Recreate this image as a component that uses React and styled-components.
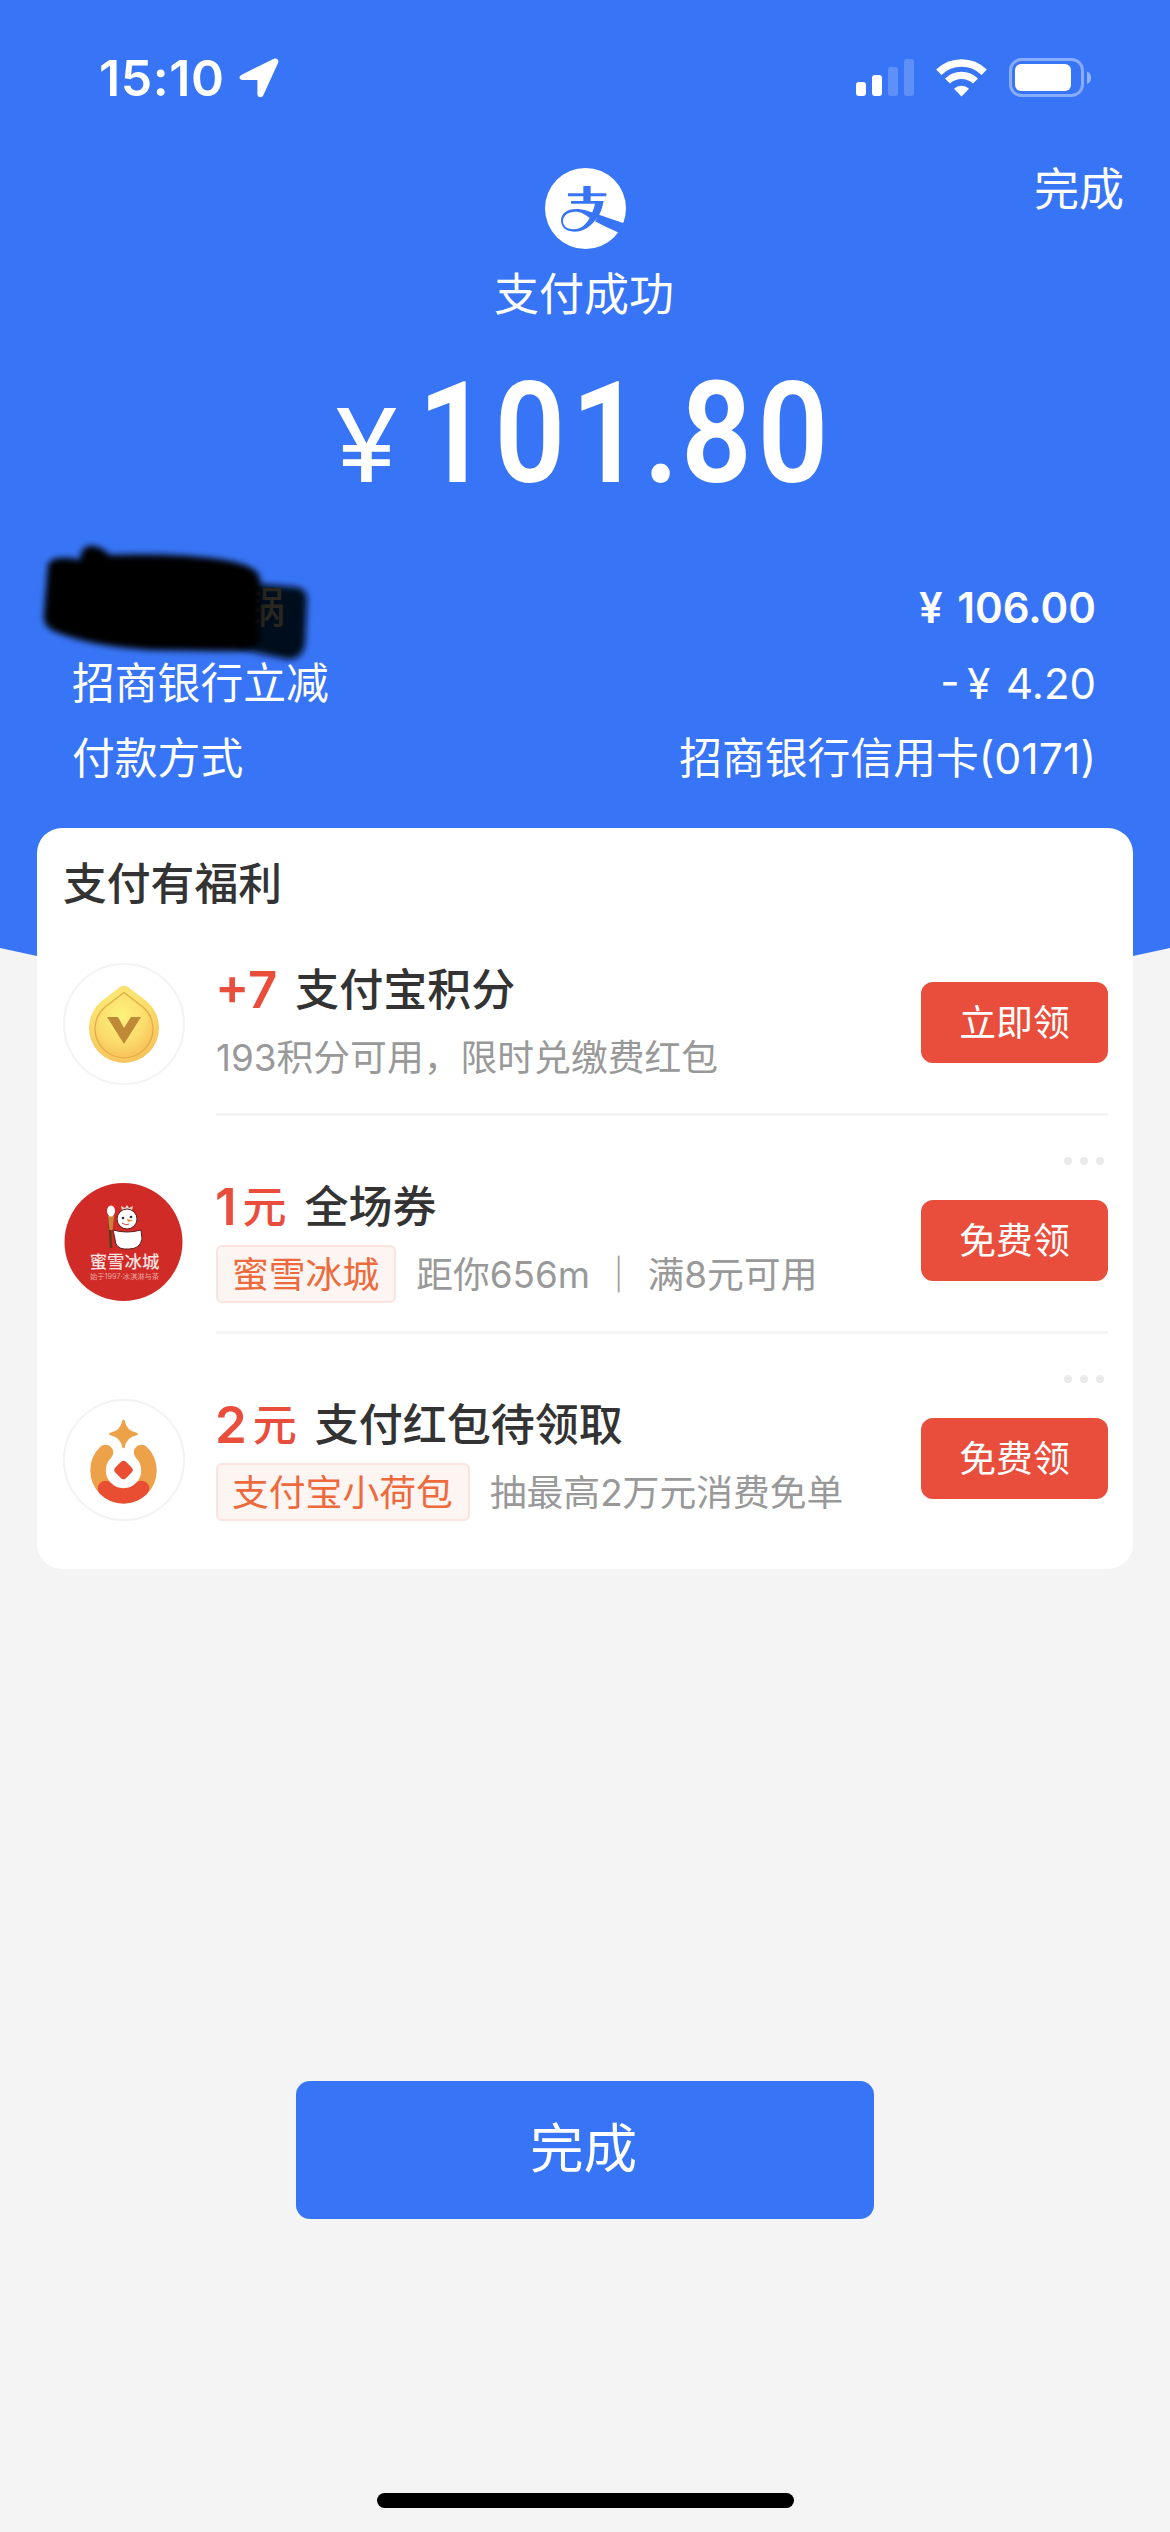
import styled, { createGlobalStyle } from "styled-components"

const Palette = {
  Blue: "#3875f6",
  Red: "#e94e3c",
  Orange: "#ec6a3c",
  Page: "#f4f4f4",
  Ink: "#333333",
  Muted: "#999999",
  Line: "#f4f4f4",
}

const GlobalStyle = createGlobalStyle`
  body {
    margin: 0;
    background: ${Palette.Page};
    font-family: Inter, "Noto Sans CJK SC", sans-serif;
  }

  * {
    box-sizing: border-box;
  }
`

const Screen = styled.main`
  display: flex;
  flex-direction: column;
  align-items: center;
  width: 1170px;
  height: 2532px;
  background: ${Palette.Page};
  overflow: hidden;
`

const Hero = styled.header`
  width: 100%;
  height: 990px;
  margin-bottom: -162px;
  flex: none;
  color: #fff;
  background: ${Palette.Blue};
  clip-path: polygon(0 0, 1170px 0, 1170px 948px, 1133px 956px, 960px 990px, 210px 990px, 37px 956px, 0 948px);
`

const StatusBar = styled.div`
  display: flex;
  align-items: center;
  height: 155px;
  padding: 0 78px 0 99px;
`

const Clock = styled.span`
  width: 140px;
  font-size: 50px;
  font-weight: 600;
  letter-spacing: 0.6px;
`

const StatusIcons = styled.div`
  display: flex;
  align-items: center;
  gap: 22px;
  margin-left: auto;
`

const NavBar = styled.div`
  display: grid;
  grid-template-columns: 1fr 81px 1fr;
  padding: 13px 46px 0 46px;
  height: 110px;
`

const NavAction = styled.button`
  grid-column: 3;
  justify-self: end;
  height: 44px;
  padding: 0;
  border: 0;
  background: none;
  color: #fff;
  font: inherit;
  font-size: 45px;
  line-height: 44px;
`

const LogoSlot = styled.div`
  grid-column: 2;
  height: 81px;
`

const ResultText = styled.p`
  margin: 0;
  padding-right: 2px;
  text-align: center;
  font-size: 45px;
  line-height: 60px;
`

const Amount = styled.div`
  display: flex;
  align-items: baseline;
  height: 140px;
  margin-top: 39px;
  padding-left: 335px;
  line-height: 140px;
`

const Currency = styled.span`
  width: 83px;
  font-size: 102px;
  font-weight: 400;
  transform: scaleX(1.12);
  transform-origin: 0 50%;
`

// Roboto squeezed to the proportions of a DIN numeral
const Digits = styled.span`
  font-family: Roboto, sans-serif;
  font-size: 141px;
  font-weight: 600;
  letter-spacing: 6.5px;
  transform: scaleX(0.88);
  transform-origin: 0 50%;
`

const Point = styled.span`
  margin: 0 -4px 0 -5px;
`

const Details = styled.dl`
  margin: 66px 0 0;
  padding: 0 74px 0 72px;
`

const DetailRow = styled.div`
  position: relative;
  display: flex;
  justify-content: space-between;
  height: 75.5px;
  line-height: 75.5px;
  font-size: 42.8px;
  font-weight: ${(p) => (p.$strong ? 600 : 400)};
  white-space: pre;

  dd {
    margin: 0;
    font-size: ${(p) => (p.$money ? "42px" : "inherit")};
    word-spacing: 4px;
  }
`

const ScribbleSvg = styled.svg`
  position: absolute;
  left: -52px;
  top: -30px;
`

const Card = styled.section`
  position: relative;
  flex: none;
  width: 1096px;
  height: 741px;
  padding: 25px 25px 0 26px;
  border-radius: 25px;
  background: #fff;
`

const CardTitle = styled.h2`
  margin: 0;
  height: 62px;
  line-height: 64px;
  color: ${Palette.Ink};
  font-size: 43.8px;
  font-weight: 500;
`

const Offer = styled.article`
  display: flex;
  height: 218px;
  padding-top: 48px;
`

const OfferIcon = styled.div`
  flex: none;
  width: 122px;
  height: 122px;
`

const OfferBody = styled.div`
  position: relative;
  display: flex;
  flex: 1;
  align-items: flex-start;
  height: 153px;
  margin-left: 31px;
  border-bottom: 3px solid ${(p) => (p.$last ? "transparent" : Palette.Line)};
`

const OfferText = styled.div`
  flex: 1;
  margin-top: ${(p) => (p.$tagged ? "-2px" : "-1px")};
`

const OfferTitle = styled.h3`
  display: flex;
  margin: 0;
  height: 56px;
  line-height: 56px;
  color: ${Palette.Ink};
  font-size: 44px;
  font-weight: 500;
`

const Reward = styled.span`
  display: flex;
  margin-right: 18px;
  color: ${Palette.Red};
  font-weight: 600;

  b {
    margin-right: ${(p) => (p.$unit ? "6px" : 0)};
    margin-left: -1px;
    font-size: 51px;
    font-weight: 600;
  }

  span {
    font-weight: 500;
  }
`

const OfferMeta = styled.div`
  display: flex;
  align-items: center;
  height: 58px;
  margin-top: 10px;
  color: ${Palette.Muted};
  font-size: 36.8px;
  line-height: 57px;
  font-weight: 400;
  white-space: pre;
`

const ShopTag = styled.span`
  height: 58px;
  margin-right: 20px;
  padding: 0 15px 0 14px;
  border: 2px solid #fbe3de;
  border-radius: 6px;
  background: #fdf5f2;
  color: ${Palette.Orange};
  line-height: 55px;
`

const ClaimButton = styled.button`
  width: 187px;
  height: 81px;
  margin-top: 19px;
  padding: 0;
  border: 0;
  border-radius: 12px;
  background: ${Palette.Red};
  color: #fff;
  font: inherit;
  font-size: 36.8px;
  line-height: 82px;
`

const MoreDots = styled.div`
  position: absolute;
  top: -24px;
  right: 4px;
  display: flex;
  gap: 8px;

  i {
    width: 8px;
    height: 8px;
    border-radius: 50%;
    background: #eaeaea;
  }
`

const DoneButton = styled.button`
  flex: none;
  width: 578px;
  height: 138px;
  margin-top: 512px;
  padding: 0 3px 3px 0;
  border: 0;
  border-radius: 14px;
  background: ${Palette.Blue};
  color: #fff;
  font: inherit;
  font-size: 53.6px;
  line-height: 135px;
`

const HomeIndicator = styled.div`
  flex: none;
  width: 417px;
  height: 15px;
  margin-top: 274px;
  border-radius: 8px;
  background: #000;
`

const LocationArrow = () => (
  <svg width="40" height="40" viewBox="0 0 40 40" fill="#fff">
    <path d="M3.2 16.4 34.5.9C37.5-.5 40.3 1.8 39 5L24.3 37.2C23 40.3 18.4 39.7 18.4 36V22H3.8C-.1 22-.9 18.2 3.2 16.4Z" />
  </svg>
)

const Signal = () => (
  <svg width="58" height="38" viewBox="0 0 58 38" fill="#fff">
    <rect x="0" y="23" width="10" height="14" rx="3" />
    <rect x="16" y="16" width="10" height="21" rx="3" />
    <rect x="32" y="8" width="10" height="29" rx="3" opacity="0.2" />
    <rect x="48" y="0" width="10" height="37" rx="3" opacity="0.2" />
  </svg>
)

const Wifi = () => (
  <svg width="51" height="38" viewBox="0 0 51 38" fill="none" stroke="#fff">
    <path d="M2.8 13.3a32.5 32.5 0 0 1 45.4 0" strokeWidth="7.5" />
    <path d="M11.5 22a20.2 20.2 0 0 1 28 0" strokeWidth="7.2" />
    <path d="M18 29.8a10.8 10.8 0 0 1 15 0L25.5 37.5Z" fill="#fff" stroke="none" />
  </svg>
)

const Battery = () => (
  <svg width="83" height="40" viewBox="0 0 83 40">
    <rect x="1.5" y="1.5" width="72" height="36" rx="11" fill="none" stroke="#fff" strokeOpacity="0.4" strokeWidth="3" />
    <rect x="6" y="6" width="56" height="27" rx="6" fill="#fff" />
    <path d="M78 13.5c5.5 2 5.5 10.5 0 12.5Z" fill="#fff" fillOpacity="0.45" />
  </svg>
)

const PayLogo = () => (
  <svg width="81" height="81" viewBox="0 0 243 243" fill={Palette.Blue}>
    <circle cx="121.5" cy="121.5" r="121.5" fill="#fff" />
    <path d="M115 54h22v49h-22zM69 76h115v9H69z" />
    <path d="M78 99h98c-4 20-10 37-18 50l-22-4c6-11 11-24 14-38H78Z" />
    <path
      fillRule="evenodd"
      d="M158 146C139 175 116 191 88 191 62 191 48 177 48 157 48 137 66 123 93 123 128 123 172 147 243 167L243 206 218 193C192 181 168 170 150 160ZM134 150C118 137 106 131 91 131 70 131 54 142 54 160 54 175 67 184 86 184 107 184 123 170 134 150Z"
    />
  </svg>
)

// Marker strokes over the merchant name
const Scribble = () => (
  <ScribbleSvg width="310" height="160" viewBox="0 0 310 160">
    <defs>
      <filter id="soft" x="-10%" y="-10%" width="120%" height="120%">
        <feGaussianBlur stdDeviation="3" />
      </filter>
    </defs>
    <path
      d="M215 42 276 47Q288 49 287 61L285 105Q281 121 266 119L215 108Z"
      fill="#060d1e"
      filter="url(#soft)"
    />
    <text x="223" y="83" fontSize="42" fontWeight="500" fill="#29271f">锅</text>
    <path
      d="M28 24Q34 14 60 20Q61 4 74 6Q82 7 90 15Q160 13 205 20Q240 26 240 40L239 102Q230 112 200 111L130 110Q70 106 36 92Q22 86 24 74Z"
      fill="#000"
      filter="url(#soft)"
    />
  </ScribbleSvg>
)

const PointsIcon = () => (
  <svg width="122" height="122" viewBox="0 0 122 122">
    <defs>
      <radialGradient id="gold" cx="0.45" cy="0.35" r="0.7">
        <stop offset="0" stopColor="#fdf27a" />
        <stop offset="0.6" stopColor="#fbdc6c" />
        <stop offset="1" stopColor="#f7bd57" />
      </radialGradient>
    </defs>
    <circle cx="61" cy="61" r="60" fill="#fff" stroke="#f3f3f3" strokeWidth="2" />
    <path d="M57 24Q61 21.5 65 24L84 38.5A35 35 0 1 1 38 38.5Z" fill="url(#gold)" />
    <path
      d="M61 29.5 80 44A29 29 0 1 1 42 44Z"
      fill="url(#gold)"
      stroke="#e3ac48"
      strokeWidth="1.3"
    />
    <path d="M44 54h11l6 11 7-11h10L61 81Z" fill="#bf8a38" />
  </svg>
)

const SnowmanIcon = () => (
  <svg width="122" height="122" viewBox="0 0 122 122">
    <circle cx="60.5" cy="61" r="59" fill="#d02b26" />
    <g transform="translate(0 -18)">
      <path d="M46 46 48 85" stroke="#5b3a1c" strokeWidth="2.5" />
      <path d="M45 53h6l-1.5 14h-3Z" fill="#c8843c" />
      <ellipse cx="48" cy="48" rx="4" ry="5.5" fill="#fff" />
      <path d="M59 47 58 43l4 2 2-3 2 3 4-2-1 4Z" fill="#e8d9cf" />
      <circle cx="64" cy="56" r="10" fill="#fff" stroke="#5e1d1a" strokeWidth="1" />
      <path
        d="M50 67Q64 71 78 67L79 76Q77 86 66 86H61Q52 85 52 76Z"
        fill="#fff"
        stroke="#5e1d1a"
        strokeWidth="1"
      />
      <circle cx="60" cy="55" r="1.3" fill="#22303f" />
      <circle cx="68" cy="54" r="1.3" fill="#22303f" />
      <path d="m64 56 6 1.5-5 1.5Z" fill="#ee8a2c" />
      <path d="M59 60q4 3 7 1" stroke="#c53a3a" fill="none" />
    </g>
    <text x="61.5" y="87" textAnchor="middle" fontSize="17.4" fontWeight="500" fill="#fbe3e2">蜜雪冰城</text>
    <text x="61.5" y="97.5" textAnchor="middle" fontSize="7.3" fill="#eba3a0">始于1997·冰淇淋与茶</text>
  </svg>
)

const PurseIcon = () => (
  <svg width="122" height="122" viewBox="0 0 122 122">
    <circle cx="61" cy="61" r="60" fill="#fff" stroke="#f3f3f3" strokeWidth="2" />
    <g fill="none" strokeWidth="15.5" strokeLinecap="round">
      <path d="M42.5 53.5A25.5 25.5 0 0 0 42.5 89.5" stroke="#eda148" />
      <path d="M78.5 53.5A25.5 25.5 0 0 1 78.5 89.5" stroke="#eda148" />
      <path d="M42.5 89.5A25.5 25.5 0 0 0 78.5 89.5" stroke="#e94e33" />
    </g>
    <path
      d="M60.5 22Q62.5 33 73.5 35 62.5 37 60.5 48 58.5 37 47.5 35 58.5 33 60.5 22Z"
      fill="#eda148"
      stroke="#eda148"
      strokeWidth="2.5"
      strokeLinejoin="round"
    />
    <rect x="53" y="63.5" width="15" height="15" rx="3.5" transform="rotate(45 60.5 71)" fill="#e94e33" />
  </svg>
)

const details = [
  { label: "", value: "¥ 106.00", strong: true, money: true },
  { label: "招商银行立减", value: "-\u2009¥ 4.20", money: true },
  { label: "付款方式", value: "招商银行信用卡(0171)" },
]

const offers = [
  {
    Icon: PointsIcon,
    reward: "+7",
    title: "支付宝积分",
    meta: "193积分可用，限时兑缴费红包",
    action: "立即领",
  },
  {
    Icon: SnowmanIcon,
    reward: "1",
    unit: "元",
    title: "全场券",
    tag: "蜜雪冰城",
    meta: "距你656m ｜ 满8元可用",
    action: "免费领",
    more: true,
  },
  {
    Icon: PurseIcon,
    reward: "2",
    unit: "元",
    title: "支付红包待领取",
    tag: "支付宝小荷包",
    meta: "抽最高2万元消费免单",
    action: "免费领",
    more: true,
  },
]

const App = () => (
  <>
    <GlobalStyle />
    <Screen>
      <Hero>
        <StatusBar>
          <Clock>15:10</Clock>
          <LocationArrow />
          <StatusIcons>
            <Signal />
            <Wifi />
            <Battery />
          </StatusIcons>
        </StatusBar>
        <NavBar>
          <LogoSlot>
            <PayLogo />
          </LogoSlot>
          <NavAction>完成</NavAction>
        </NavBar>
        <ResultText>支付成功</ResultText>
        <Amount>
          <Currency>¥</Currency>
          <Digits>
            101<Point>.</Point>80
          </Digits>
        </Amount>
        <Details>
          {details.map((row) => (
            <DetailRow key={row.value} $strong={row.strong} $money={row.money}>
              <dt>{row.label || <Scribble />}</dt>
              <dd>{row.value}</dd>
            </DetailRow>
          ))}
        </Details>
      </Hero>

      <Card>
        <CardTitle>支付有福利</CardTitle>
        {offers.map(({ Icon, ...offer }, i) => (
          <Offer key={offer.title}>
            <OfferIcon>
              <Icon />
            </OfferIcon>
            <OfferBody $last={i === offers.length - 1}>
              <OfferText $tagged={offer.tag}>
                <OfferTitle>
                  <Reward $unit={offer.unit}>
                    <b>{offer.reward}</b>
                    {offer.unit && <span>{offer.unit}</span>}
                  </Reward>
                  {offer.title}
                </OfferTitle>
                <OfferMeta>
                  {offer.tag && <ShopTag>{offer.tag}</ShopTag>}
                  {offer.meta}
                </OfferMeta>
              </OfferText>
              <ClaimButton>{offer.action}</ClaimButton>
              {offer.more && (
                <MoreDots>
                  <i />
                  <i />
                  <i />
                </MoreDots>
              )}
            </OfferBody>
          </Offer>
        ))}
      </Card>

      <DoneButton>完成</DoneButton>
      <HomeIndicator />
    </Screen>
  </>
)

export default App
